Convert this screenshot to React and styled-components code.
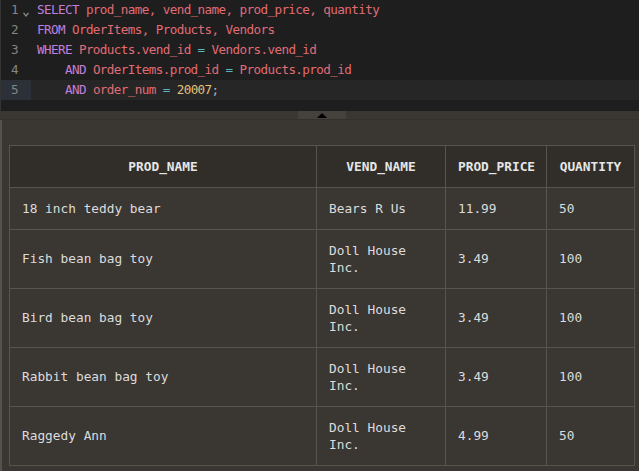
import React from "react";
import styled, { createGlobalStyle } from "styled-components";

const Global = createGlobalStyle`
  html, body { margin: 0; padding: 0; background: #3a3632; }
  #root { height: 471px; }
`;

const Page = styled.div`
  width: 639px;
  height: 471px;
  display: flex;
  flex-direction: column;
  overflow: hidden;
`;

const Editor = styled.div`
  height: 111px;
  flex: none;
  background: #1e1e1e;
  border-left: 1px solid #343434;
  box-sizing: border-box;
  font-family: "DejaVu Sans Mono", "Liberation Mono", monospace;
  font-size: 12.6px;
  letter-spacing: -0.6px;
`;

const Line = styled.div`
  display: flex;
  height: 20px;
  line-height: 20px;
  background: ${(p) => (p.$active ? "#262626" : "transparent")};
`;

const Gutter = styled.div`
  width: 30px;
  flex: none;
  position: relative;
  box-sizing: border-box;
  padding-left: 10px;
  color: #858585;
  background: ${(p) => (p.$active ? "#2c3039" : "transparent")};
`;

const Fold = styled.svg`
  position: absolute;
  left: 22px;
  top: 12px;
`;

const Code = styled.div`
  padding-left: 6px;
  white-space: pre;
  color: #abb2bf;
`;

const Kw = styled.span`color: #c27edb;`;
const Id = styled.span`color: #e06c75;`;
const Op = styled.span`color: #56b6c2;`;
const Num = styled.span`color: #e5c07b;`;

const Splitter = styled.div`
  height: 8px;
  flex: none;
  background: #3a3732;
  display: flex;
  justify-content: center;
  padding-left: 5px;
  border-bottom: 1px solid #34312d;
`;

const Handle = styled.div`
  width: 48px;
  height: 100%;
  background: #45423d;
  display: flex;
  align-items: center;
  justify-content: center;
`;

const Arrow = styled.div`
  width: 0;
  height: 0;
  border-left: 5px solid transparent;
  border-right: 5px solid transparent;
  border-bottom: 5px solid #000;
`;

const Results = styled.div`
  flex: 1;
  background: #3a3632;
  border-left: 2px solid #55524d;
  padding: 25px 0 0 7px;
`;

const Table = styled.table`
  border-collapse: collapse;
  table-layout: fixed;
  width: 625px;
  font-family: "DejaVu Sans Mono", "Liberation Mono", monospace;
  font-size: 12.8px;
  line-height: 17.5px;
  color: #dcdcdc;
`;

const Th = styled.th`
  border: 1px solid #57534d;
  background: #312e2a;
  color: #e6e6e6;
  font-weight: bold;
  text-align: center;
  padding: 11.5px 12px;
  height: 18px;
  box-sizing: content-box;
`;

const Td = styled.td`
  border: 1px solid #57534d;
  padding: 11.5px 12px;
  text-align: left;
  vertical-align: middle;
  box-sizing: content-box;
  height: ${(p) => (p.$tall ? "35px" : "18px")};
`;

const rows = [
  ["18 inch teddy bear", "Bears R Us", "11.99", "50"],
  ["Fish bean bag toy", "Doll House Inc.", "3.49", "100"],
  ["Bird bean bag toy", "Doll House Inc.", "3.49", "100"],
  ["Rabbit bean bag toy", "Doll House Inc.", "3.49", "100"],
  ["Raggedy Ann", "Doll House Inc.", "4.99", "50"],
];

const cols = [
  ["PROD_NAME", 307],
  ["VEND_NAME", 129],
  ["PROD_PRICE", 101],
  ["QUANTITY", 88],
];

export default function App() {
  return (
    <Page>
      <Global />
      <Editor>
        <Line>
          <Gutter>
            1
            <Fold width="6" height="5" viewBox="0 0 6 5">
              <path d="M0.5 0.8 L3 4 L5.5 0.8" stroke="#8a8a8a" strokeWidth="1.3" fill="none" />
            </Fold>
          </Gutter>
          <Code>
            <Kw>SELECT</Kw> <Id>prod_name, vend_name, prod_price, quantity</Id>
          </Code>
        </Line>
        <Line>
          <Gutter>2</Gutter>
          <Code>
            <Kw>FROM</Kw> <Id>OrderItems, Products, Vendors</Id>
          </Code>
        </Line>
        <Line>
          <Gutter>3</Gutter>
          <Code>
            <Kw>WHERE</Kw> <Id>Products.vend_id</Id> <Op>=</Op> <Id>Vendors.vend_id</Id>
          </Code>
        </Line>
        <Line>
          <Gutter>4</Gutter>
          <Code>
            {"    "}<Kw>AND</Kw> <Id>OrderItems.prod_id</Id> <Op>=</Op> <Id>Products.prod_id</Id>
          </Code>
        </Line>
        <Line $active>
          <Gutter $active>5</Gutter>
          <Code>
            {"    "}<Kw>AND</Kw> <Id>order_num</Id> <Op>=</Op> <Num>20007</Num>;
          </Code>
        </Line>
      </Editor>
      <Splitter>
        <Handle>
          <Arrow />
        </Handle>
      </Splitter>
      <Results>
        <Table>
          <colgroup>
            {cols.map(([n, w]) => (
              <col key={n} style={{ width: w }} />
            ))}
          </colgroup>
          <thead>
            <tr>
              {cols.map(([n]) => (
                <Th key={n}>{n}</Th>
              ))}
            </tr>
          </thead>
          <tbody>
            {rows.map((r, i) => (
              <tr key={i}>
                {r.map((c, j) => (
                  <Td key={j} $tall={i > 0}>{c}</Td>
                ))}
              </tr>
            ))}
          </tbody>
        </Table>
      </Results>
    </Page>
  );
}
